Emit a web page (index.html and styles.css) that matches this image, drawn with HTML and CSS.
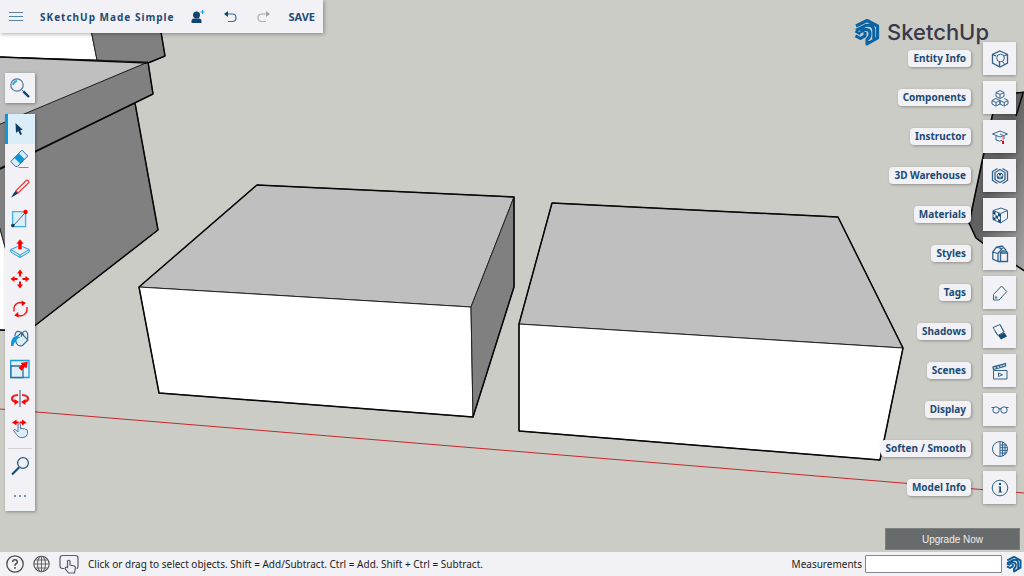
FILE: index.html
```html
<!DOCTYPE html>
<html lang="en">
<head>
<meta charset="utf-8">
<meta name="viewport" content="width=device-width, initial-scale=1">
<title>SketchUp</title>
<link rel="stylesheet" href="styles.css">
</head>
<body>
<svg class="defs" aria-hidden="true">
  <symbol id="logo" viewBox="0 0 26 28">
    <path fill="none" stroke="currentColor" stroke-width="3.100" stroke-linejoin="round" d="M2 8 13 2.500 23.600 8V20L13 26V21.500Q16 20 16 15.500T11 11.500L6.500 13.800M2 12.500 11.500 7.600Q19.800 6 19.800 13V21M1.500 13 6.500 15.800M11 14V17.800L6.500 20.500 1.500 17.800"/>
  </symbol>
</svg>
<div class="app">
  <main class="stage">
    <svg class="scene" viewBox="0 0 1024 552" preserveAspectRatio="xMinYMin slice" aria-label="3D model">
      <defs>
        <linearGradient id="shade" x1="0" y1="0" x2="1" y2="1">
          <stop offset="0" stop-color="#777"/><stop offset=".45" stop-color="#606060"/><stop offset="1" stop-color="#aaa"/>
        </linearGradient>
      </defs>
      <path class="axis" d="M0 409 1024 493"/>
      <g class="thin">
        <path class="white" d="M-2 20H89L97 60-2 57z"/>
        <path class="dark" d="M89 20H159L165 56 148 63 97 60z"/>
        <path class="dark" d="M-2 169 135 103 158 230 28 331-2 222z"/>
        <path class="white" d="M-2 222 28 331-2 330z"/>
        <path class="dark" d="M148 62 153 94-2 169V124z"/>
        <path class="light" d="M-2 57 148 62-2 125z"/>
        <path class="light" d="M257 185 514 197 471 307 139 287z"/>
        <path class="white" d="M139 287 471 307 473 417 159 393z"/>
        <path class="dark" d="M514 197V287L473 417 471 307z"/>
        <path class="light" d="M552 203 838 217 903 348 519 324z"/>
        <path class="white" d="M519 324 903 348 880 460 519 431z"/>
        <path fill="url(#shade)" d="M997 95 1026 92V272L984 244 976 238 969 223 971 214z"/>
      </g>
      <g class="bold">
        <path d="M159 20 165 56 148 63 0 57M148 62 153 94 0 169M135 103 158 230 28 331 0 330"/>
        <path d="M257 185 514 197V287L473 417 159 393 139 287z"/>
        <path d="M552 203 838 217 903 348 880 460 519 431V324z"/>
        <path d="M997 95 1026 92M1023 93 1016 116M997 95 984 152 971 214 969 223 976 238 984 244 1026 272"/>
      </g>
    </svg>

    <div class="hud">
      <div class="left">
        <header class="topbar">
          <button class="plain" aria-label="Menu"><svg width="14" height="10" viewBox="0 0 14 10"><path stroke="#5f86a6" d="M0 .5H14M0 4.500H14M0 8.500H14"/></svg></button>
          <h1 class="title">SKetchUp Made Simple</h1>
          <button class="plain share" aria-label="Share"><svg width="14" height="14" viewBox="0 0 14 14"><circle cx="5.500" cy="5" r="3.500" fill="#0f4570"/><path fill="#0f4570" d="M.5 13V11Q.5 8.500 3 8.500H8Q10.500 8.500 10.500 11V13z"/><path stroke="#1aa0e0" d="M11.500 0V4M9.500 2H13.500"/></svg></button>
          <button class="plain undo" aria-label="Undo"><svg width="13" height="12" viewBox="0 0 13 12"><path fill="none" stroke="#45688a" stroke-width="1.200" d="M3 3H8Q12 3 12 6.800T8 10.500H4"/><path fill="#0f4570" d="M0 3 4 0V6z"/></svg></button>
          <button class="plain redo" aria-label="Redo" disabled><svg width="13" height="12" viewBox="0 0 13 12"><path fill="none" stroke="#aaacb6" stroke-width="1.200" d="M10 3H5Q1 3 1 6.800T5 10.500H9"/><path fill="#a0a2ad" d="M13 3 9 0V6z"/></svg></button>
          <button class="plain save">SAVE</button>
        </header>

        <button class="search" aria-label="Search"><svg width="20" height="20" viewBox="0 0 20 20" fill="none"><circle cx="7" cy="7" r="6.200" stroke="#54779a" stroke-width="1.200"/><path stroke="#29a8e5" stroke-width="1.800" d="M3 7Q3.500 3.500 7 3"/><path stroke="#54779a" d="M11.500 11.500 14 14"/><path stroke="#0f4570" stroke-width="2.400" d="M13.300 13.300 19 19"/></svg></button>

        <nav class="tools" aria-label="Tools">
          <button class="tool active" aria-label="Select"><svg viewBox="0 0 20 20"><path fill="#103c63" d="M5.500 4 6 14 8.200 12 10.200 16 12 15.200 10.200 11.200 12.800 10.800z"/></svg></button>
          <button class="tool" aria-label="Eraser"><svg viewBox="0 0 20 20"><path fill="#dceefa" stroke="#376b94" d="M.8 12.500 12 1.200 17.800 7 7.500 17.500H5.500z"/><path fill="#0d97db" d="M4.300 8.900 8.800 4.200 14.700 10.200 10.200 14.800z"/><path stroke="#29a8e5" d="M8.500 18.500H18.500"/></svg></button>
          <button class="tool" aria-label="Line"><svg viewBox="0 0 20 20"><path fill="#fff" stroke="#f23b3b" stroke-width="1.300" d="M6 11.800 15.500 2.300Q17 .3 18.300 1.800T17.500 4.800L8 14z"/><path fill="#103c63" d="M5.500 12 8 14.500 5.500 16 1 18.800 3.500 14.500z"/></svg></button>
          <button class="tool" aria-label="Rectangle"><svg viewBox="0 0 20 20"><path fill="#dceefa" stroke="#45b0e2" stroke-width="1.300" d="M2.600 2.600H15.600V17.600H2.600z"/><path stroke="#416785" d="M3 17 15.500 3.500"/><circle cx="15.500" cy="3" r="2.200" fill="#f00"/><circle cx="2.800" cy="16.500" r="1.800" fill="#103c63"/></svg></button>
          <button class="tool" aria-label="Push/Pull"><svg viewBox="0 0 20 20"><path fill="#dceefa" stroke="#1b9fdc" d="M.8 10.500 10 6.500 19.200 10.500V13L10 18.500.8 13zM.8 10.500 10 16 19.200 10.500M10 16V18.500"/><path fill="#f00" stroke="#f1f1f6" stroke-width=".5" d="M10 0 14 5H12V10.500H8V5H6z"/></svg></button>
          <button class="tool" aria-label="Move"><svg viewBox="0 0 20 20"><path fill="#f00" d="M10 .5 13 4.500H11V7.500H9V4.500H7zM10 19.500 7 15.500H9V12.500H11V15.500H13zM.5 10 4.500 7V9H7.500V11H4.500V13zM19.500 10 15.500 13V11H12.500V9H15.500V7z"/></svg></button>
          <button class="tool" aria-label="Rotate"><svg viewBox="0 0 20 20"><path fill="none" stroke="#f21c1c" stroke-width="1.400" d="M4 12.500V10.500A6.300 6.300 0 0 1 13.500 4.500M17 8V10A6.500 6.500 0 0 1 7.500 16"/><path fill="#f00" d="M11.500 1.500 16 4 12 7.200zM9 18.500 4.200 16.500 8 13z"/></svg></button>
          <button class="tool" aria-label="Paint"><svg viewBox="0 0 20 20"><path fill="#dceefa" stroke="#376b94" stroke-width="1.200" d="M5 9.500 11 4 18 11 12.500 16.500Q9 18 6.500 14.500z"/><path fill="none" stroke="#376b94" stroke-width="1.200" d="M5 7Q5 2 9 2.500 12 3 14 6.500M11 8Q12 2 15.500 2 18.500 3 17.500 10"/><path fill="#0d97db" d="M1 17Q.5 10 4.500 7.500 8 6 10 8.500 6.500 9.500 6 12.500 3.500 13.500 3.500 17z"/></svg></button>
          <button class="tool" aria-label="Scale"><svg viewBox="0 0 20 20"><path fill="#e4f2fb" stroke="#1b9fdc" stroke-width="1.300" d="M.7 1.500H19V18.500H.7z"/><path fill="#dceefa" stroke="#376b94" stroke-width="1.300" d="M1 7H13V18.500H1z"/><path fill="#f00" d="M17.800 2.700 16.500 9.500 14.700 8 11.500 11.700 8.500 8.700 12 5.500 10.500 4z"/></svg></button>
          <button class="tool" aria-label="Flip"><svg viewBox="0 0 20 20"><path fill="none" stroke="#f21c1c" stroke-width="2.200" d="M8 6Q2 6.500 2 9.500T7 13M12 6Q18 6.500 18 9.500T13 13"/><path fill="#f00" d="M4.500 10 9 13 4.500 16zM15.500 10 11 13 15.500 16z"/><path stroke="#54779a" stroke-width="1.300" d="M10 1V18"/></svg></button>
          <button class="tool" aria-label="Drag"><svg viewBox="0 0 20 20"><path fill="#dceefa" stroke="#54779a" d="M8 13V5.500Q9.300 4 10.500 5.500V10Q12 8.500 13 10 14.500 9 15.500 10.500 17.500 10 17.500 12V14.500Q17 18.500 13 18.500H10.500Q8.500 18.500 6.500 15.500L3.500 11.500Q4 9.500 6 11z"/><path fill="#f00" d="M2 3.500 6.500 .5V2.500H8.700V4.500H6.500V6.500zM16.500 3.500 12 6.500V4.500H9.800V2.500H12V.5z"/></svg></button>
          <hr class="rule">
          <button class="tool" aria-label="Zoom"><svg viewBox="0 0 20 20" fill="none"><circle cx="13" cy="7" r="5.400" stroke="#2d5f89" stroke-width="1.300"/><path stroke="#174c78" stroke-width="2.200" d="M9 11.500 2 18.500"/></svg></button>
          <button class="tool" aria-label="More tools"><svg viewBox="0 0 20 20"><path fill="#7690aa" d="M4 9H6V11H4zM9 9H11V11H9zM14 9H16V11H14z"/></svg></button>
        </nav>
      </div>

      <div class="right">
        <div class="brand"><svg width="26" height="28" aria-hidden="true"><use href="#logo"/></svg><span>SketchUp</span></div>
        <nav class="panels" aria-label="Panels">
          <button class="panel"><span class="label">Entity Info</span><span class="tile"><svg viewBox="0 0 18 18"><path class="heavy" d="M9 1 16.500 4.500V13L9 17 1.500 13V4.500zM1.500 4.500 5 6M16.500 4.500 13 6M8.500 17V12"/><circle cx="9.500" cy="8" r="3.800"/><path d="M11.500 11.500 14 15"/></svg></span></button>
          <button class="panel"><span class="label">Components</span><span class="tile"><svg viewBox="0 0 18 18"><path d="M9 1.500 13 3.500V7.500L9 9.500 5 7.500V3.500zM5 3.500 9 5.500 13 3.500M9 5.500V9M4.800 9.500 9 11.500V15L4.800 17 1 15V11.500zM1 11.500 5 13.500 9 11.500M5 13.500V17M13.200 9.500 17 11.500V15L13.200 17 9 15V11.500L13.200 13.500 17 11.500M13.200 13.500V17"/></svg></span></button>
          <button class="panel"><span class="label">Instructor</span><span class="tile"><svg viewBox="0 0 18 18"><path d="M1.500 6 9 3 16.500 6 9 9zM5 8V12Q9 14 11 12.500M13 8V11M9 6 12 7.500"/><path class="red" d="M12 8V14"/><path class="redfill" d="M11 13H13V16H11z"/></svg></span></button>
          <button class="panel"><span class="label">3D Warehouse</span><span class="tile"><svg viewBox="0 0 18 18"><path class="heavy" d="M6.500 1.500 1.500 4.500V13.500L6.500 16.500M11.500 1.500 16.500 4.500V13.500L11.500 16.500M9 2.500 14 5.500V12.500L9 15.500 4 12.500V5.500z"/><circle cx="9" cy="9" r="3"/><path class="ink" d="M8 6.500H10V8.500H8zM6.500 9.500H8.500V11.500H6.500zM9.500 9.500H11.500V11.500H9.500z"/></svg></span></button>
          <button class="panel"><span class="label">Materials</span><span class="tile"><svg viewBox="0 0 18 18"><path d="M2 4.500 10 2 16.500 4.500V12.500L9.500 17 2 13.500zM2 4.500 9.500 7.500 16.500 4.500M9.500 7.500V17"/><path class="ink" d="M2 5 4.500 6V9L2 8zM4.500 9 7 10V13L4.500 12zM7 7 9.500 8V11L7 10zM2 11 4.500 12V14.500L2 13.500zM7 13 9.500 14V17L7 15.500z"/></svg></span></button>
          <button class="panel"><span class="label">Styles</span><span class="tile"><svg viewBox="0 0 18 18"><path class="heavy" d="M7 8.500 1.800 7 5.500 2 11 1 15 5M1.800 7V14L7 16.500V8.500L11 3.500 5.500 2M7 16.500H9.500"/><path class="paper" d="M9.500 8V16.500H16.500V8zM9.500 8 11 6H15L16.500 8"/></svg></span></button>
          <button class="panel"><span class="label">Tags</span><span class="tile"><svg viewBox="0 0 18 18"><path d="M2.500 10.500 10.500 2 15.800 7.500 8 16H2.500z"/><circle cx="5" cy="13.500" r=".8"/></svg></span></button>
          <button class="panel"><span class="label">Shadows</span><span class="tile"><svg viewBox="0 0 18 18"><path class="ink" d="M7 12.500 13.500 9.500 16 13.500 10 16.500z"/><path d="M2 4.500 9 1.500 13 9 7 12.500zM4 8.500 7 12.500M9 1.500 13 9"/></svg></span></button>
          <button class="panel"><span class="label">Scenes</span><span class="tile"><svg viewBox="0 0 18 18"><path d="M2.500 8.500H16V17H2.500zM7.500 11V14.500L11.500 12.800z"/><path class="heavy" d="M2 5 14.500 1.500V4L2.500 7.500zM5 4.200 6 6.500M8 3.300 9 5.600M11 2.500 12 4.700"/></svg></span></button>
          <button class="panel"><span class="label">Display</span><span class="tile"><svg viewBox="0 0 18 18"><circle cx="5" cy="9" r="3.200"/><circle cx="13" cy="9" r="3.200"/><path d="M8 8Q9 7 10 8M.5 6.500H3M15 6.500H17.500"/></svg></span></button>
          <button class="panel"><span class="label">Soften / Smooth</span><span class="tile"><svg viewBox="0 0 18 18"><circle cx="9" cy="9" r="7.500"/><path d="M9 1.500V16.500M11.500 2V16M14 3.500V14.500M9 5H15.300M9 7.700H16.500M9 10.400H16.500M9 13H15.300"/></svg></span></button>
          <button class="panel"><span class="label">Model Info</span><span class="tile"><svg viewBox="0 0 18 18"><circle cx="9" cy="9" r="7.800"/><path class="ink" d="M8 4H10V6H8zM7.500 7.500H10V12.500H11V13.500H7.500V12.500H8.300V8.300H7.500z"/></svg></span></button>
        </nav>
        <button class="upgrade">Upgrade Now</button>
      </div>
    </div>
  </main>

  <footer class="status">
    <button class="plain" aria-label="Help"><svg width="18" height="18" viewBox="0 0 18 18" fill="none" stroke="#4a4a50"><circle cx="9" cy="9" r="8.200" stroke-width="1.300"/><path stroke-width="1.500" d="M6.700 7Q6.700 4.800 9 4.800T11.300 7Q11.300 8.200 9.800 9 9 9.500 9 10.800M9 12V13.700"/></svg></button>
    <button class="plain" aria-label="Language"><svg width="17" height="18" viewBox="0 0 17 18" fill="none" stroke="#66666c" stroke-width="1.100"><circle cx="8.500" cy="9" r="7.700" stroke="#4a4a50"/><ellipse cx="8.500" cy="9" rx="4" ry="7.700"/><path d="M8.500 1V17M1 9H16M2.300 5H14.700M2.300 13H14.700"/></svg></button>
    <button class="plain" aria-label="Interaction"><svg width="20" height="20" viewBox="0 0 20 20" fill="none" stroke="#5c5a70" stroke-width="1.200"><path d="M5 14.500H3.500Q1 14.500 1 12V4Q1 1.500 3.500 1.500H16.500Q19 1.500 19 4V12Q19 14.500 17.500 14.500"/><path fill="#f1f1f6" d="M8.500 12.500V7Q9.800 5.500 11 7V11L15.500 12Q16.500 12.500 16.300 14L15.500 19H9.500L6 14.500Q6.500 12.500 8.500 13.500z"/></svg></button>
    <p class="hint">Click or drag to select objects. Shift = Add/Subtract. Ctrl = Add. Shift + Ctrl = Subtract.</p>
    <label class="measure" for="measure">Measurements</label>
    <input class="field" id="measure" type="text">
    <svg class="mark" width="16" height="18" aria-hidden="true"><use href="#logo"/></svg>
  </footer>
</div>
</body>
</html>
```
FILE: styles.css
```css
* { box-sizing: border-box; }
body {
  margin: 0;
  font-family: "Noto Sans", "Open Sans", sans-serif;
  font-size: 10px;
  color: #1d4a73;
}
button {
  margin: 0;
  padding: 0;
  border: 0;
  background: none;
  font: inherit;
  color: inherit;
  cursor: pointer;
}
svg { display: block; flex: none; }
.defs { position: absolute; width: 0; height: 0; }

.app { display: flex; flex-direction: column; height: 100vh; min-height: 576px; }
.stage { position: relative; flex: 1; background: #ccccc7; overflow: hidden; }
.scene { position: absolute; inset: 0; width: 100%; height: 100%; }
.thin path { stroke: #222; stroke-width: 1; }
.bold path { fill: none; stroke: #080808; stroke-width: 1.5; stroke-linejoin: round; }
.white { fill: #fff; }
.light { fill: #bfbfbf; }
.dark { fill: #808080; }
.axis { stroke: #c62828; fill: none; }

.hud { position: relative; display: flex; justify-content: space-between; height: 100%; }
.left { display: flex; flex-direction: column; align-items: flex-start; }

.topbar {
  display: flex;
  align-items: center;
  height: 33px;
  padding: 0 8px 0 9px;
  background: #f1f1f6;
  box-shadow: 1px 1px 4px rgba(0, 0, 0, .35);
}
.title { margin: 0 17px; font-size: 10px; line-height: 16px; letter-spacing: 1px; }
.undo { margin-left: 19px; }
.redo { margin-left: 20px; }
.save { margin-left: 18px; font-size: 11px; font-weight: 700; }

.search {
  display: grid;
  place-items: center;
  width: 30px;
  height: 30px;
  margin: 40px 0 0 5px;
  background: #f1f1f6;
  box-shadow: 1px 1px 3px rgba(0, 0, 0, .35);
}
.tools {
  display: flex;
  flex-direction: column;
  width: 30px;
  margin: 11px 0 0 5px;
  background: #f1f1f6;
  box-shadow: 1px 1px 3px rgba(0, 0, 0, .35);
}
.tool { display: grid; place-items: center; height: 30px; }
.tool svg { width: 20px; height: 20px; fill: none; }
.active { background: linear-gradient(90deg, #0d97db 3px, #dcedfa 3px); }
.rule { width: 24px; margin: 4px auto 2px; border: 0; border-top: 1px solid #cfcfd4; }

.right { display: flex; flex-direction: column; align-items: flex-end; }
.brand {
  display: flex;
  align-items: center;
  gap: 7px;
  height: 28px;
  margin: 18px 35px 0 0;
  color: #0b63a3;
}
.brand span { font: 500 22px/28px Inter, "Liberation Sans", sans-serif; color: #3b3849; }
.panels { display: flex; flex-direction: column; gap: 6px; margin: -4px 8px 0 0; }
.panel { display: flex; align-items: center; justify-content: flex-end; gap: 12px; }
.label {
  padding: 0 5px;
  border-radius: 4px;
  background: #f1f1f6;
  box-shadow: 1px 1px 3px rgba(0, 0, 0, .3);
  font-weight: 700;
  line-height: 17px;
}
.tile {
  display: grid;
  place-items: center;
  width: 33px;
  height: 33px;
  background: #f1f1f6;
  box-shadow: 0 1px 3px rgba(0, 0, 0, .3);
}
.tile svg { width: 18px; height: 18px; fill: none; stroke: #34648c; stroke-width: 1; }
.tile .heavy { stroke-width: 1.3; }
.tile .paper { fill: #f1f1f6; stroke-width: 1.3; }
.tile .ink { fill: #174c78; stroke: none; }
.tile .red { stroke: #f66; }
.tile .redfill { fill: #f00; stroke: none; }
.upgrade {
  width: 135px;
  height: 22px;
  margin: auto 4px 2px 0;
  background: #686b6b;
  border: 1px solid #7c7f7f;
  color: #eee;
  font: 10px "Liberation Sans", Arial, sans-serif;
}

.status {
  display: flex;
  align-items: center;
  gap: 9px;
  height: 24px;
  padding: 0 2px 0 6px;
  background: #f1f1f6;
  color: #1c1c20;
}
.hint { flex: 1; margin: 0; line-height: 16px; white-space: nowrap; }
.measure { margin-right: -6px; }
.field {
  width: 137px;
  height: 18px;
  margin-right: -5px;
  padding: 0 4px;
  border: 1px solid #85858a;
  border-radius: 1px;
  background: #fff;
  font: inherit;
}
.mark { color: #0b5a94; }
```
